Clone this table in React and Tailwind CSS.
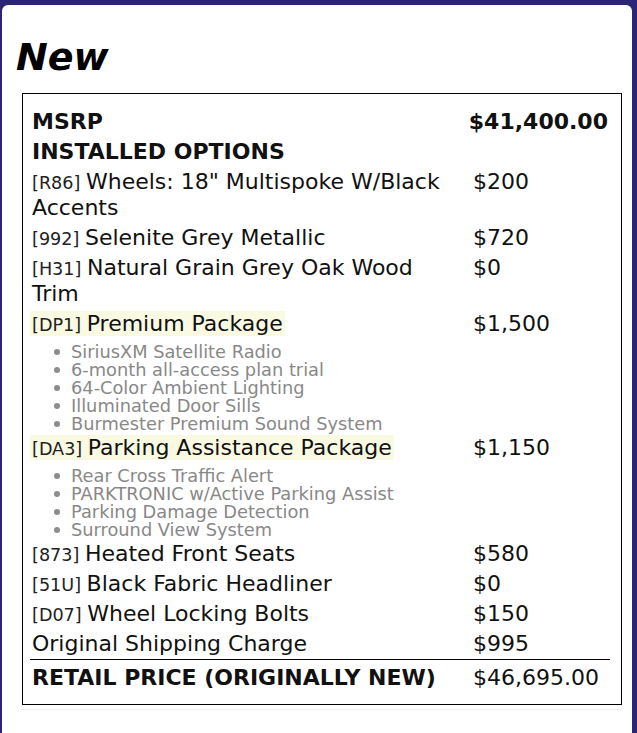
import React from "react";

const font = { fontFamily: '"DejaVu Sans", Verdana, sans-serif' };

function Code({ c }) {
  return <span className="text-[17.6px] leading-none text-[#222]">[{c}] </span>;
}

function Row({ left, right, className = "" }) {
  return (
    <div className={"flex " + className}>
      <div className="w-[441px] pl-[2px] pr-[10px]">{left}</div>
      <div className="flex-1 px-[2px]">{right}</div>
    </div>
  );
}

function Pkg({ code, name, items, price }) {
  return (
    <div className="flex pt-[2px]">
      <div className="w-[441px] pl-[2px] pr-[10px]">
        <span className="bg-[#fafae3] px-[2px] -mx-[2px]">
          <Code c={code} />
          {name}
        </span>
        <ul className="mt-[6px] pl-[22px] text-[17.8px] leading-[18px] text-[#888888]">
          {items.map((i) => (
            <li key={i} className="flex items-center">
              <span className="w-[6px] h-[6px] rounded-full bg-[#8c8c8c] mr-[11px] shrink-0" />
              <span>{i}</span>
            </li>
          ))}
        </ul>
      </div>
      <div className="flex-1 px-[2px]">{price}</div>
    </div>
  );
}

export default function App() {
  return (
    <div className="min-h-screen bg-[#2b2477] pt-[5px] pl-[2px] pr-[5px]" style={font}>
      <div className="bg-white rounded-t-[6px] min-h-[728px] pt-[30px]">
        <h1 className="ml-[14px] text-[38px] leading-[44px] font-bold italic text-black">New</h1>
        <div className="ml-[20px] mt-[14px] w-[600px] border border-black pl-[7px] pr-[11px] pt-[13px] pb-[11px] text-[22px] leading-[26px] text-[#111]">
          <Row className="py-[2px] font-bold" left="MSRP" right="$41,400.00" />
          <Row className="py-[2px] font-bold" left="INSTALLED OPTIONS" right="" />
          <Row className="py-[2px]" left={<><Code c="R86" />Wheels: 18" Multispoke W/Black Accents</>} right="$200" />
          <Row className="py-[2px]" left={<><Code c="992" />Selenite Grey Metallic</>} right="$720" />
          <Row className="py-[2px]" left={<><Code c="H31" />Natural Grain Grey Oak Wood Trim</>} right="$0" />
          <Pkg
            code="DP1"
            name="Premium Package"
            price="$1,500"
            items={[
              "SiriusXM Satellite Radio",
              "6-month all-access plan trial",
              "64-Color Ambient Lighting",
              "Illuminated Door Sills",
              "Burmester Premium Sound System",
            ]}
          />
          <Pkg
            code="DA3"
            name="Parking Assistance Package"
            price="$1,150"
            items={[
              "Rear Cross Traffic Alert",
              "PARKTRONIC w/Active Parking Assist",
              "Parking Damage Detection",
              "Surround View System",
            ]}
          />
          <Row className="py-[2px]" left={<><Code c="873" />Heated Front Seats</>} right="$580" />
          <Row className="py-[2px]" left={<><Code c="51U" />Black Fabric Headliner</>} right="$0" />
          <Row className="py-[2px]" left={<><Code c="D07" />Wheel Locking Bolts</>} right="$150" />
          <Row className="py-[2px]" left="Original Shipping Charge" right="$995" />
          <div className="border-t border-black pt-[5px] pb-[2px] flex">
            <div className="w-[441px] pl-[2px] pr-[10px] font-bold">RETAIL PRICE (ORIGINALLY NEW)</div>
            <div className="flex-1 px-[2px]">$46,695.00</div>
          </div>
        </div>
        <div className="ml-[20px] mt-[4px] w-[600px] h-px bg-[#eeeeee]" />
      </div>
    </div>
  );
}
